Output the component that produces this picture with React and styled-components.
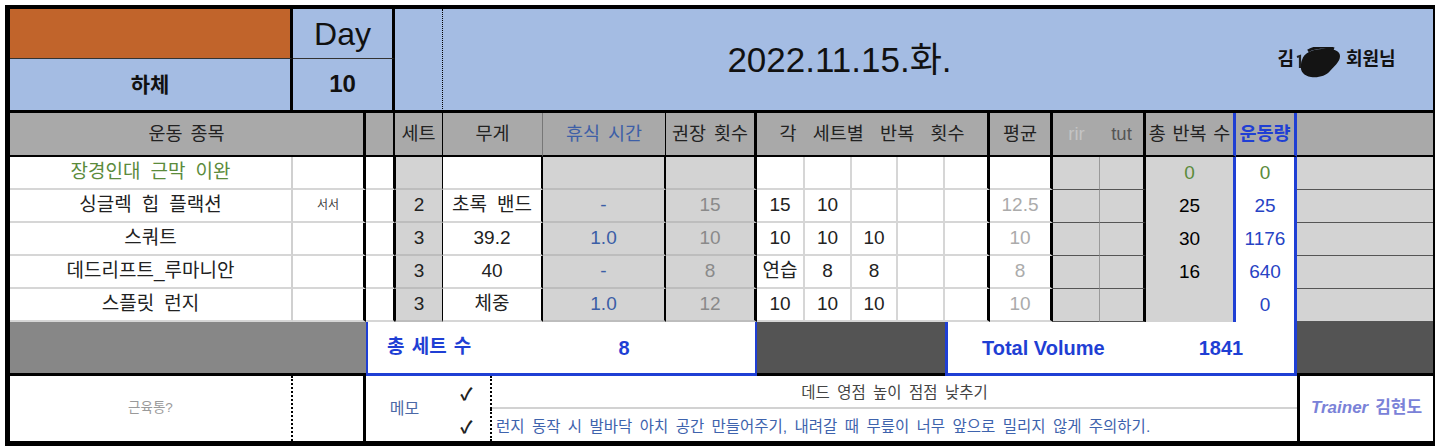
import React from "react";
import styled, { createGlobalStyle } from "styled-components";

const GlobalStyle = createGlobalStyle`
  html, body { margin: 0; padding: 0; background: #fff; }
  body { font-family: "Liberation Sans", "Noto Sans CJK KR", sans-serif; }
`;

const BLUE = "#1f3fd4";
const GREY_HEAD = "#a9a9a9";
const GREY_CELL = "#d3d3d3";

const Sheet = styled.div`
  display: grid;
  grid-template-columns: 283px 73px 29px 48px 100px 123px 91px 48px 47px 46px 47px 45px 63px 47px 46px 90px 61px 136px;
  grid-template-rows: 50px 54px 44px 33px 33px 33px 33px 33px 54px 65px;
  width: 1423px;
  border-style: solid;
  border-color: #000;
  border-width: 4px 2px 5px 5px;
  margin: 5px 0 0 5px;
  font-family: "Liberation Sans", "Noto Sans CJK KR", sans-serif;
  word-spacing: 0.3em;
`;

const Cell = styled.div`
  box-sizing: border-box;
  display: flex;
  align-items: center;
  justify-content: ${(p) => p.$justify || "center"};
  grid-column: ${(p) => p.$col || "auto"};
  grid-row: ${(p) => p.$row || "auto"};
  background: ${(p) => p.$bg || "#fff"};
  color: ${(p) => p.$color || "#222"};
  border-right: ${(p) => p.$r || "none"};
  border-bottom: ${(p) => p.$b || "none"};
  border-left: ${(p) => p.$l || "none"};
  border-top: ${(p) => p.$t || "none"};
  font-size: ${(p) => p.$size || 19}px;
  font-weight: ${(p) => p.$weight || 400};
  white-space: nowrap;
  overflow: hidden;
  line-height: 1.2;
`;

/* ---- header blocks ---- */
const BrandCell = styled(Cell)`
  background: #c1642b;
  border-right: 3px solid #000;
  border-bottom: 1px solid #333;
`;
const DayCell = styled(Cell)`
  background: #a4bce3;
  border-right: 3px solid #000;
  border-bottom: 1px solid #333;
  font-size: 32px;
  color: #111;
  padding-top: 2px;
`;
const PartCell = styled(Cell)`
  background: #a4bce3;
  border-right: 3px solid #000;
  border-bottom: 3px solid #000;
  font-size: 21px;
  font-weight: 700;
  color: #111;
`;
const DayNumber = styled(PartCell)`
  font-size: 24px;
`;
const SpacerCell = styled(Cell)`
  background: #a4bce3;
  border-right: 1px dotted #000;
  border-bottom: 3px solid #000;
`;
const DateCell = styled(Cell)`
  background: #a4bce3;
  border-bottom: 3px solid #000;
  font-size: 35px;
  color: #111;
`;
const MemberCell = styled(Cell)`
  background: #a4bce3;
  border-bottom: 3px solid #000;
  font-size: 18px;
  font-weight: 700;
  color: #111;
  padding-left: 4px;
`;
const Blob = styled.svg`
  margin: 6px 4px 0 2px;
  flex: none;
`;

/* ---- column headers ---- */
const ColHead = styled(Cell)`
  background: ${GREY_HEAD};
  border-bottom: 2px solid #000;
  font-size: 18.5px;
  word-spacing: ${(p) => p.$ws || "0.15em"};
`;

/* ---- data ---- */
const DataCell = styled(Cell)``;
const SideNote = styled.span`
  font-size: 12px;
  color: #444;
`;

/* ---- footer ---- */
const FooterBlock = styled(Cell)`
  background: ${(p) => p.$bg};
  border-bottom: 3px solid #000;
`;
const SummaryCell = styled(Cell)`
  display: grid;
  grid-template-columns: ${(p) => p.$labelWidth}px 1fr;
  align-items: center;
  justify-items: start;
  border-left: ${(p) => p.$lw}px solid ${BLUE};
  border-right: ${(p) => p.$rw}px solid ${BLUE};
  border-bottom: 3px solid ${BLUE};
  color: ${BLUE};
  font-weight: 700;
`;
const SummaryLabel = styled.span`
  padding-left: ${(p) => p.$pad}px;
  font-size: ${(p) => p.$size}px;
  word-spacing: ${(p) => p.$ws || "0.1em"};
`;
const SummaryValue = styled.span`
  justify-self: center;
  font-size: 20px;
`;

const SoreCell = styled(Cell)`
  border-right: 2px dotted #000;
  font-size: 13.5px;
  color: #9a9a9a;
`;
const MemoLabel = styled(Cell)`
  font-size: 16px;
  color: #4b68a6;
`;
const MemoBody = styled.div`
  grid-column: 5 / 18;
  display: grid;
  grid-template-columns: 49px 1fr;
  grid-template-rows: 1fr 1fr;
  font-size: 15.5px;
  word-spacing: 0.2em;
`;
const Check = styled.div`
  display: flex;
  align-items: center;
  justify-content: center;
  border-right: 2px dotted #000;
  font-size: 17px;
  font-weight: 700;
  color: #222;
  padding-top: ${(p) => (p.$first ? 0 : 2)}px;
`;
const MemoLine = styled.div`
  display: flex;
  align-items: center;
  justify-content: ${(p) => (p.$center ? "center" : "flex-start")};
  padding-left: ${(p) => (p.$center ? 0 : 4)}px;
  color: ${(p) => p.$color};
  border-bottom: ${(p) => (p.$divider ? "2px solid #d2d2d2" : "none")};
  white-space: nowrap;
`;
const TrainerCell = styled(Cell)`
  border-left: 3px solid #000;
  font-weight: 700;
  font-size: 17px;
  color: #7a82d8;
  gap: 7px;
  word-spacing: normal;
`;
const TrainerWord = styled.span`
  font-style: italic;
`;

const rowLine = "2px solid #d6d6d6";
const greyLine = "2px solid #bdbdbd";
const darkLine = "1px solid #555";

const columns = [
  { key: "name", r: "2px solid #d0d0d0" },
  { key: "sub", r: "3px solid #000" },
  { key: "blank", r: "2px solid #000" },
  { key: "set", bg: GREY_CELL, r: "1px solid #000", b: greyLine, l: "1px solid #000" },
  { key: "weight", r: "2px solid #000" },
  { key: "rest", bg: GREY_CELL, r: "2px solid #000", color: "#3b5ea6", b: greyLine },
  { key: "rec", bg: GREY_CELL, r: "3px solid #000", color: "#8a8a8a", b: greyLine },
  { key: "r0", r: rowLine },
  { key: "r1", r: rowLine },
  { key: "r2", r: rowLine },
  { key: "r3", r: rowLine },
  { key: "r4", r: "3px solid #000" },
  { key: "avg", r: "3px solid #000", color: "#ababab" },
  { key: "rir", bg: GREY_CELL, r: "1px solid #9a9a9a", b: darkLine },
  { key: "tut", bg: GREY_CELL, r: "3px solid #000", b: darkLine },
  { key: "total", bg: GREY_CELL, r: `3px solid ${BLUE}`, b: "none", color: "#000" },
  { key: "vol", r: `3px solid ${BLUE}`, b: "none", color: "#2743c4" },
  { key: "last", bg: GREY_CELL, b: darkLine },
];

const GREEN = "#5b8b3b";

const rows = [
  { name: "장경인대 근막 이완", nameColor: GREEN, total: "0", totalColor: GREEN, vol: "0", volColor: GREEN },
  { name: "싱글렉 힙 플랙션", sub: "서서", set: "2", weight: "초록 밴드", rest: "-", rec: "15", reps: ["15", "10"], avg: "12.5", total: "25", vol: "25" },
  { name: "스쿼트", set: "3", weight: "39.2", rest: "1.0", rec: "10", reps: ["10", "10", "10"], avg: "10", total: "30", vol: "1176" },
  { name: "데드리프트_루마니안", set: "3", weight: "40", rest: "-", rec: "8", reps: ["연습", "8", "8"], avg: "8", total: "16", vol: "640" },
  { name: "스플릿 런지", set: "3", weight: "체중", rest: "1.0", rec: "12", reps: ["10", "10", "10"], avg: "10", vol: "0" },
];

function valueFor(row, key) {
  if (key === "sub") return row.sub ? <SideNote>{row.sub}</SideNote> : null;
  if (key.length === 2 && key[0] === "r" && /\d/.test(key[1])) {
    return (row.reps || [])[Number(key[1])] || null;
  }
  return row[key] || null;
}

function colorFor(row, col) {
  if (col.key === "name" && row.nameColor) return row.nameColor;
  if (col.key === "total" && row.totalColor) return row.totalColor;
  if (col.key === "vol" && row.volColor) return row.volColor;
  return col.color || "#222";
}

export default function App() {
  return (
    <>
      <GlobalStyle />
      <Sheet>
        {/* header rows 1-2 */}
        <BrandCell $col="1 / 2" $row="1 / 2" />
        <DayCell $col="2 / 4" $row="1 / 2">Day</DayCell>
        <SpacerCell $col="4 / 5" $row="1 / 3" />
        <DateCell $col="5 / 17" $row="1 / 3">2022.11.15.화.</DateCell>
        <MemberCell $col="17 / 19" $row="1 / 3">
          김
          <Blob width="46" height="32" viewBox="0 0 46 32">
            <path d="M1 10 L4 9 L4 20 L9 20" stroke="#222" strokeWidth="2.2" fill="none" />
            <path
              d="M6 13 C8 6 16 2 26 2 C35 1 44 3 44 9 C44 15 38 19 34 24 C30 29 22 31 15 30 C8 29 4 24 5 19 C5 17 5 15 6 13 Z"
              fill="#141414"
            />
            <path d="M12 4 C18 0 30 -1 38 2" stroke="#141414" strokeWidth="3" fill="none" />
          </Blob>
          회원님
        </MemberCell>
        <PartCell $col="1 / 2" $row="2 / 3">하체</PartCell>
        <DayNumber $col="2 / 4" $row="2 / 3">10</DayNumber>

        {/* column headers */}
        <ColHead $col="1 / 3" $r="3px solid #000">운동 종목</ColHead>
        <ColHead $r="2px solid #000" />
        <ColHead $r="1px solid #000">세트</ColHead>
        <ColHead $r="1px solid #777">무게</ColHead>
        <ColHead $r="1px solid #000" $color="#3d5fa7">휴식 시간</ColHead>
        <ColHead $r="3px solid #000">권장 횟수</ColHead>
        <ColHead $col="8 / 13" $r="3px solid #000" $ws="0.6em">각 세트별 반복 횟수</ColHead>
        <ColHead $r="3px solid #000">평균</ColHead>
        <ColHead $color="#c4c4c4">rir</ColHead>
        <ColHead $r="3px solid #000" $color="#555">tut</ColHead>
        <ColHead $r={`3px solid ${BLUE}`} $ws="0.08em">총 반복 수</ColHead>
        <ColHead $r={`3px solid ${BLUE}`} $color={BLUE} $weight={700}>운동량</ColHead>
        <ColHead />

        {/* data rows */}
        {rows.map((row, i) =>
          columns.map((col) => (
            <DataCell
              key={`${i}-${col.key}`}
              $bg={col.bg || "#fff"}
              $r={col.r || "none"}
              $l={col.l || "none"}
              $b={col.b !== undefined ? col.b : rowLine}
              $color={colorFor(row, col)}
            >
              {valueFor(row, col.key)}
            </DataCell>
          ))
        )}

        {/* footer row 1 */}
        <FooterBlock $col="1 / 3" $bg="#878787" />
        <SummaryCell $col="3 / 8" $labelWidth={125} $lw={2} $rw={2}>
          <SummaryLabel $pad={19} $size={19}>총 세트 수</SummaryLabel>
          <SummaryValue>8</SummaryValue>
        </SummaryCell>
        <FooterBlock $col="8 / 12" $bg="#545454" />
        <SummaryCell $col="12 / 18" $labelWidth={200} $lw={3} $rw={3}>
          <SummaryLabel $pad={34} $size={20} $ws="normal">Total Volume</SummaryLabel>
          <SummaryValue>1841</SummaryValue>
        </SummaryCell>
        <FooterBlock $col="18 / 19" $bg="#545454" />

        {/* footer row 2 */}
        <SoreCell $col="1 / 2">근육통?</SoreCell>
        <Cell $col="2 / 3" $r="3px solid #000" />
        <MemoLabel $col="3 / 5">메모</MemoLabel>
        <MemoBody>
          <Check $first>✓</Check>
          <MemoLine $center $divider $color="#444">데드 영점 높이 점점 낮추기</MemoLine>
          <Check>✓</Check>
          <MemoLine $color="#3e63ad">
            런지 동작 시 발바닥 아치 공간 만들어주기, 내려갈 때 무릎이 너무 앞으로 밀리지 않게 주의하기.
          </MemoLine>
        </MemoBody>
        <TrainerCell $col="18 / 19">
          <TrainerWord>Trainer</TrainerWord>
          <span>김현도</span>
        </TrainerCell>
      </Sheet>
    </>
  );
}
